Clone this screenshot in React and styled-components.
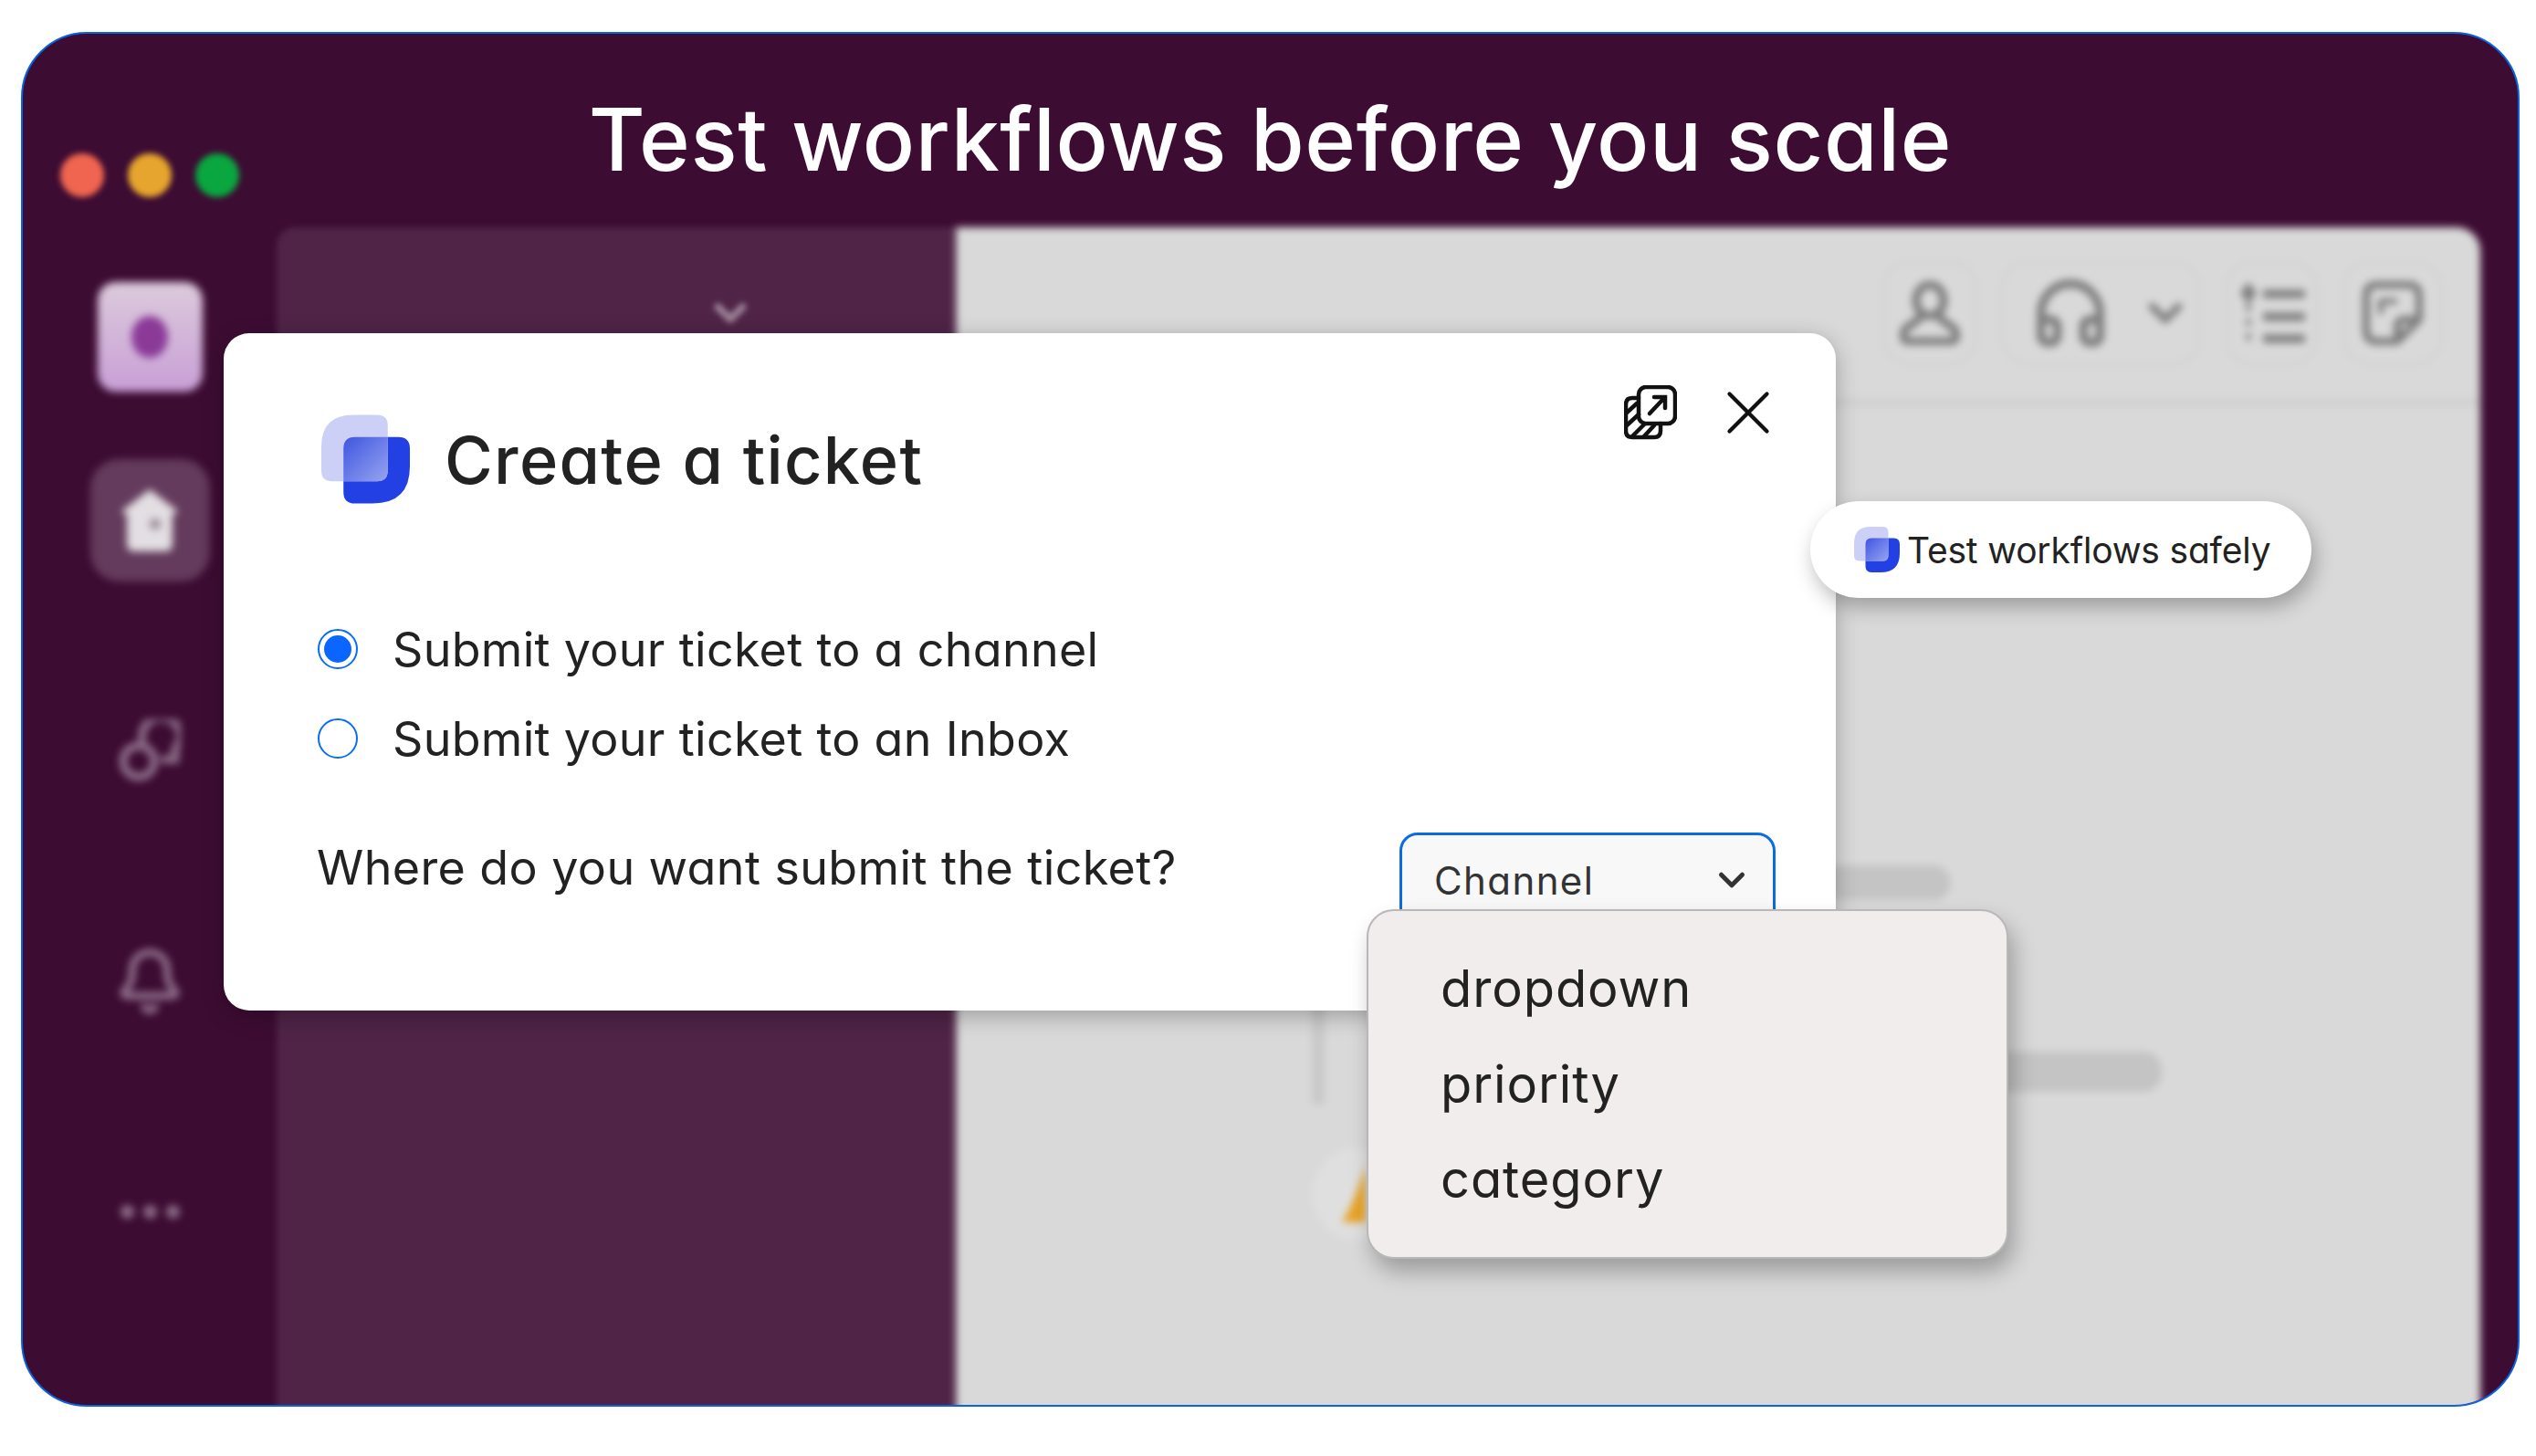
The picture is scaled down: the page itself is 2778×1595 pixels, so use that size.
import React from 'react';
import styled, { createGlobalStyle } from 'styled-components';
import { Bell, ChevronDown, Headphones, X } from 'lucide-react';

const GlobalStyle = createGlobalStyle`
  * { box-sizing: border-box; }
  html, body { margin: 0; background: #fff; }
  body {
    font-family: Inter, "Open Sans", "Liberation Sans", sans-serif;
    font-feature-settings: "cv11" 1;
    color: #222;
  }
`;

const Page = styled.div`
  width: 2778px;
  height: 1595px;
  padding: 35px 18px 54px 23px;
`;

const Frame = styled.div`
  position: relative;
  height: 100%;
  display: flex;
  flex-direction: column;
  overflow: hidden;
  background: #3d0c33;
  border: 2px solid #0b62e0;
  border-radius: 72px;
`;

const TopBar = styled.header`
  flex: 0 0 212px;
  display: grid;
  grid-template-columns: 1fr auto 1fr;
`;

const Lights = styled.div`
  display: flex;
  gap: 26px;
  margin: 131px 0 0 41px;
  filter: blur(3px);
`;

const Light = styled.span`
  width: 48px;
  height: 48px;
  border-radius: 50%;
  background: ${props => props.color};
`;

const Title = styled.h1`
  margin: 58px 0 0;
  font-size: 95px;
  line-height: 116px;
  font-weight: 500;
  letter-spacing: 0.6px;
  color: #fff;
  white-space: nowrap;
`;

const Body = styled.div`
  flex: 1;
  display: flex;
  min-height: 0;
  margin-bottom: -30px;
`;

const Rail = styled.nav`
  flex: 0 0 278px;
  display: flex;
  flex-direction: column;
  align-items: center;
  padding-top: 60px;
  filter: blur(4px);
`;

const WorkspaceTile = styled.div`
  width: 115px;
  height: 120px;
  display: flex;
  align-items: center;
  justify-content: center;
  margin-bottom: 74px;
  border-radius: 20px;
  background: linear-gradient(#dccbdc, #c89fd6);
`;

const WorkspaceDot = styled.span`
  width: 40px;
  height: 46px;
  border-radius: 50%;
  background: #8b3a98;
`;

const HomeTile = styled.div`
  width: 131px;
  height: 134px;
  display: flex;
  align-items: center;
  justify-content: center;
  margin-bottom: 60px;
  border-radius: 32px;
  background: #643b5c;
`;

const NavSlot = styled.div`
  height: 252px;
  display: flex;
  align-items: center;
  justify-content: center;
  color: #8d6c88;
`;

const Dots = styled.div`
  display: flex;
  gap: 10px;
`;

const Dot = styled.span`
  width: 15px;
  height: 15px;
  border-radius: 50%;
  background: #8d6c88;
`;

const SidePanel = styled.aside`
  flex: 0 0 744px;
  display: flex;
  justify-content: flex-end;
  align-items: flex-start;
  padding: 67px 220px 0 0;
  border-top-left-radius: 20px;
  background: #4f2447;
  color: #9c8397;
  filter: blur(3px);
`;

const Main = styled.main`
  flex: 0 0 1670px;
  display: flex;
  flex-direction: column;
  border-top-right-radius: 26px;
  background: #d9d9d9;
  filter: blur(4px);
`;

const Toolbar = styled.div`
  flex: 0 0 196px;
  display: flex;
  justify-content: flex-end;
  align-items: flex-start;
  gap: 26px;
  padding: 36px 41px 0 0;
  border-bottom: 8px solid #d0d0d0;
`;

const ToolButton = styled.div`
  width: ${props => props.$width}px;
  height: 115px;
  display: flex;
  align-items: center;
  justify-content: center;
  gap: ${props => props.$gap || 0}px;
  padding-left: ${props => props.$inset || 0}px;
  border: 3px solid #d2d2d2;
  border-radius: 30px;
  color: #7d7d7d;
`;

const Thread = styled.div`
  flex: 1;
  display: flex;
  padding-left: 390px;
`;

const ThreadGutter = styled.div`
  display: flex;
  flex-direction: column;
  align-items: center;
  width: 100px;
  padding-top: 555px;
`;

const Rule = styled.div`
  width: 14px;
  height: 210px;
  margin-left: -86px;
  background: #c9c9c9;
`;

const Avatar = styled.div`
  width: 100px;
  height: 100px;
  margin-top: 48px;
  padding-right: 8px;
  display: flex;
  align-items: center;
  justify-content: center;
  border-radius: 50%;
  background: #dfdfdf;
`;

const ThreadBars = styled.div`
  padding-top: 503px;
`;

const Bar = styled.div`
  width: ${props => props.$width}px;
  height: ${props => props.$height}px;
  margin-left: ${props => props.$left}px;
  margin-bottom: 166px;
  border-radius: 20px;
  background: #c4c4c4;
`;

const Dialog = styled.section`
  position: absolute;
  left: 220px;
  top: 328px;
  width: 1766px;
  height: 742px;
  padding: 89px 66px 0 102px;
  border-radius: 28px;
  background: #fff;
  box-shadow: 0 6px 24px rgba(0, 0, 0, 0.28);
`;

const DialogHeader = styled.div`
  display: flex;
  align-items: center;
  height: 98px;
  margin-bottom: 110px;
`;

const HeaderLogo = styled.svg`
  flex: none;
  width: 97px;
  height: 98px;
  margin: 0 38px 0 5px;
`;

const DialogTitle = styled.h2`
  margin: 0;
  font-size: 72px;
  font-weight: 500;
  letter-spacing: 1.3px;
  color: #222;
`;

const Actions = styled.div`
  display: flex;
  align-items: center;
  gap: 37px;
  margin: -102px -11px 0 auto;
  color: #111;
`;

const RadioRow = styled.label`
  height: 98px;
  display: flex;
  align-items: center;
  gap: 38px;
  font-size: 52px;
  letter-spacing: 0.3px;
  color: #222;
`;

const Radio = styled.span`
  flex: none;
  width: 44px;
  height: 44px;
  margin-left: 1px;
  display: flex;
  align-items: center;
  justify-content: center;
  border: 2px solid #0a6cf5;
  border-radius: 50%;
`;

const RadioMark = styled.span`
  width: 30px;
  height: 30px;
  border-radius: 50%;
  background: #0a66ff;
`;

const QuestionRow = styled.div`
  display: flex;
  justify-content: space-between;
  margin-top: 54px;
`;

const Question = styled.div`
  font-size: 52px;
  line-height: 78px;
  letter-spacing: 0.4px;
  color: #222;
`;

const Select = styled.div`
  width: 412px;
  height: 110px;
  display: flex;
  justify-content: space-between;
  align-items: center;
  padding: 0 22px 6px 35px;
  border: 3px solid #0b6be0;
  border-radius: 20px;
  background: #f8f8f8;
  font-size: 42px;
  letter-spacing: 1.4px;
  color: #333;
`;

const Dropdown = styled.ul`
  position: absolute;
  left: 1472px;
  top: 959px;
  width: 703px;
  height: 383px;
  margin: 0;
  padding: 33px 0 0 79px;
  list-style: none;
  border: 2px solid #b9b7b7;
  border-radius: 30px;
  background: #f2eded;
  box-shadow: 6px 14px 24px rgba(0, 0, 0, 0.28);
`;

const DropdownItem = styled.li`
  height: 104.5px;
  line-height: 104px;
  font-size: 56px;
  letter-spacing: 0.9px;
  color: #222;
`;

const Pill = styled.div`
  position: absolute;
  left: 1958px;
  top: 512px;
  width: 549px;
  height: 106px;
  display: flex;
  align-items: center;
  gap: 8px;
  padding-left: 48px;
  border-radius: 53px;
  background: #fff;
  box-shadow: 4px 10px 22px rgba(0, 0, 0, 0.28);
  font-size: 39px;
  letter-spacing: -0.2px;
  color: #222;
`;

const PillLogo = styled.svg`
  flex: none;
  width: 50px;
  height: 50px;
`;

// two overlapping rounded shapes of the product mark
function LogoMark() {
  return (
    <>
      <defs>
        <linearGradient id="markOverlap" x1="0" y1="0" x2="1" y2="1">
          <stop offset="0" stopColor="#3f55e0" />
          <stop offset="1" stopColor="#96a4f0" />
        </linearGradient>
      </defs>
      <path d="M30 25 H87 Q100 25 100 38 V58 Q100 100 58 100 H38 Q25 100 25 87 V38 Q25 25 38 25 Z" fill="#2340e4" />
      <path d="M36 0 H63 Q75 0 75 12 V63 Q75 75 63 75 H12 Q0 75 0 63 V36 Q0 0 36 0 Z" fill="#ccd0f7" />
      <path d="M38 25 H75 V63 Q75 75 63 75 H25 V38 Q25 25 38 25 Z" fill="url(#markOverlap)" />
    </>
  );
}

function ExpandIcon() {
  return (
    <svg width="58" height="60" viewBox="0 0 58 60" fill="none" stroke="currentColor" strokeWidth="4.5" strokeLinecap="round">
      <path d="M16 14 H9 Q2 14 2 21 V50 Q2 57 9 57 H33 Q40 57 40 50 V42" />
      <path d="M3 30 L14 20 M3 44 L16 32 M9 56 L22 43 M22 56 L33 44" />
      <rect x="16" y="2" width="40" height="40" rx="8" />
      <path d="M28 31 L44 14 M33 13 H45 V25" />
    </svg>
  );
}

function HouseIcon() {
  return (
    <svg width="62" height="68" viewBox="0 0 62 68">
      <path d="M31 0 L62 24 L56 28 V60 Q56 68 48 68 H14 Q6 68 6 60 V28 L0 24 Z" fill="#e2dee2" />
      <circle cx="37" cy="38" r="6" fill="#9a8a96" />
    </svg>
  );
}

function ChatIcon() {
  return (
    <svg width="68" height="70" viewBox="0 0 68 70" fill="none" stroke="currentColor" strokeWidth="9">
      <circle cx="22" cy="46" r="17" />
      <path d="M26 22 A21 20 0 1 1 62 32 V44 H50" strokeLinecap="round" />
    </svg>
  );
}

function PersonIcon() {
  return (
    <svg width="66" height="70" viewBox="0 0 66 70" fill="none" stroke="currentColor" strokeWidth="9">
      <ellipse cx="33" cy="21" rx="15" ry="17" />
      <path d="M24 36 Q22 42 12 48 Q4 52 4 60 Q4 66 12 66 H54 Q62 66 62 60 Q62 52 54 48 Q44 42 42 36" />
    </svg>
  );
}

function ListIcon() {
  return (
    <svg width="72" height="68" viewBox="0 0 72 68" fill="none" stroke="currentColor" strokeWidth="9">
      <path d="M10 0 L19 12 L10 24 L1 12 Z" fill="currentColor" stroke="none" />
      <path d="M10 24 V68" strokeWidth="5" strokeDasharray="8 8" />
      <path d="M26 13 H72 M26 38 H72 M26 62 H72" />
    </svg>
  );
}

function NoteIcon() {
  return (
    <svg width="66" height="70" viewBox="0 0 66 70" fill="none" stroke="currentColor" strokeWidth="8" strokeLinejoin="round">
      <path d="M16 4 H50 Q62 4 62 16 V42 L38 66 H16 Q4 66 4 54 V16 Q4 4 16 4 Z" />
      <path d="M62 42 H46 Q38 42 38 50 V66" />
      <path d="M20 36 V22 H38" strokeWidth="6" />
    </svg>
  );
}

function App() {
  return (
    <Page>
      <GlobalStyle />
      <Frame>
        <TopBar>
          <Lights>
            <Light color="#f0654f" />
            <Light color="#e6a52e" />
            <Light color="#0aa640" />
          </Lights>
          <Title>Test workflows before you scale</Title>
        </TopBar>

        <Body>
          <Rail>
            <WorkspaceTile><WorkspaceDot /></WorkspaceTile>
            <HomeTile><HouseIcon /></HomeTile>
            <NavSlot><ChatIcon /></NavSlot>
            <NavSlot><Bell size={76} strokeWidth={2.6} /></NavSlot>
            <NavSlot>
              <Dots><Dot /><Dot /><Dot /></Dots>
            </NavSlot>
          </Rail>

          <SidePanel>
            <ChevronDown size={54} strokeWidth={3.6} />
          </SidePanel>

          <Main>
            <Toolbar>
              <ToolButton $width={104}><PersonIcon /></ToolButton>
              <ToolButton $width={219} $gap={32} $inset={22}>
                <Headphones size={86} strokeWidth={2.6} />
                <ChevronDown size={58} strokeWidth={3.2} />
              </ToolButton>
              <ToolButton $width={103}><ListIcon /></ToolButton>
              <ToolButton $width={110}><NoteIcon /></ToolButton>
            </Toolbar>
            <Thread>
              <ThreadGutter>
                <Rule />
                <Avatar>
                  <svg width="26" height="62" viewBox="0 0 26 62">
                    <path d="M26 0 V62 H0 Q14 40 26 0 Z" fill="#e8a326" />
                  </svg>
                </Avatar>
              </ThreadGutter>
              <ThreadBars>
                <Bar $width={337} $height={38} $left={263} />
                <Bar $width={821} $height={44} $left={10} />
              </ThreadBars>
            </Thread>
          </Main>
        </Body>

        <Dialog>
          <DialogHeader>
            <HeaderLogo viewBox="0 0 100 100"><LogoMark /></HeaderLogo>
            <DialogTitle>Create a ticket</DialogTitle>
            <Actions>
              <ExpandIcon />
              <X size={82} strokeWidth={1.25} />
            </Actions>
          </DialogHeader>

          <RadioRow>
            <Radio><RadioMark /></Radio>
            Submit your ticket to a channel
          </RadioRow>
          <RadioRow>
            <Radio />
            Submit your ticket to an Inbox
          </RadioRow>

          <QuestionRow>
            <Question>Where do you want submit the ticket?</Question>
            <Select>
              Channel
              <ChevronDown size={46} strokeWidth={2.6} />
            </Select>
          </QuestionRow>
        </Dialog>

        <Pill>
          <PillLogo viewBox="0 0 100 100"><LogoMark /></PillLogo>
          Test workflows safely
        </Pill>

        <Dropdown>
          <DropdownItem>dropdown</DropdownItem>
          <DropdownItem>priority</DropdownItem>
          <DropdownItem>category</DropdownItem>
        </Dropdown>
      </Frame>
    </Page>
  );
}

export default App;
